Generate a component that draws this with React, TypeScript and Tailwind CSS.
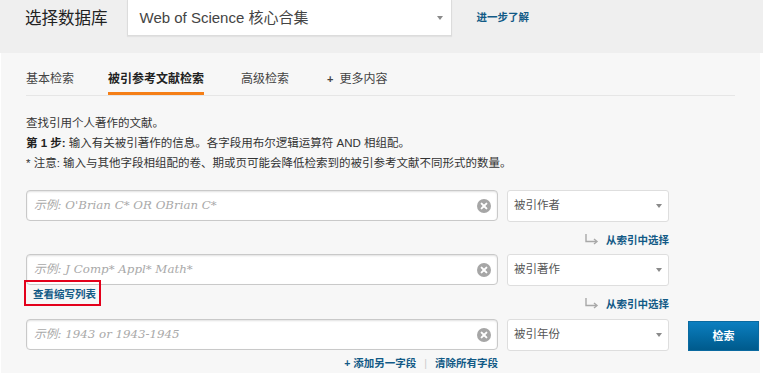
import React from "react";

const CJK = { fontFamily: '"Liberation Sans", "Noto Sans CJK SC", sans-serif' };
const PH = { fontFamily: '"DejaVu Serif", "Noto Sans CJK SC", serif' };

function ClearIcon() {
  return (
    <svg width="14" height="14" viewBox="0 0 14 14">
      <circle cx="7" cy="7" r="7" fill="#a6a6a6" />
      <path d="M4.6 4.6 L9.4 9.4 M9.4 4.6 L4.6 9.4" stroke="#fff" strokeWidth="2" strokeLinecap="round" />
    </svg>
  );
}

function Caret() {
  return (
    <svg width="6" height="4" viewBox="0 0 6 4">
      <path d="M0 0 L6 0 L3 4 Z" fill="#8a8a8a" />
    </svg>
  );
}

function Input({ placeholder }: { placeholder: string }) {
  return (
    <div className="w-[472px] h-[31px] bg-white border border-[#c9c9c9] rounded-[4px] shadow-[inset_0_1px_2px_rgba(0,0,0,0.12)] flex items-center pl-[7px] pr-[6px]">
      <span className="flex-1 italic text-[11.8px] text-[#a9a9a9]" style={PH}>
        {placeholder}
      </span>
      <ClearIcon />
    </div>
  );
}

function Select({ label }: { label: string }) {
  return (
    <div className="ml-[9px] w-[162px] h-[32px] bg-white border border-[#dedede] rounded-[3px] flex items-center pl-[6px] pr-[6px]">
      <span className="flex-1 text-[11.5px] text-[#555]">{label}</span>
      <Caret />
    </div>
  );
}

function IndexLink() {
  return (
    <div className="flex items-center h-[18px]">
      <svg width="14" height="11" viewBox="0 0 14 11" className="mr-[7px] mt-[-2px]">
        <path d="M1 0 V7.5 H11" stroke="#a8a8a8" strokeWidth="1.4" fill="none" />
        <path d="M9 5 L12 7.5 L9 10" stroke="#a8a8a8" strokeWidth="1.4" fill="none" />
      </svg>
      <span className="text-[10.5px] font-bold text-[#125a86] leading-[14px]">从索引中选择</span>
    </div>
  );
}

export default function App() {
  return (
    <div className="w-[763px] h-[380px] bg-white overflow-hidden text-[#333]" style={CJK}>
      {/* header */}
      <div className="h-[53px] bg-[#efefef] flex items-start">
        <div className="ml-[25px] mt-[8px] text-[16.5px] leading-[20px] text-[#222]">选择数据库</div>
        <div className="ml-[19px] w-[325px] h-[36px] bg-white border-x border-b border-[#dcdcdc] shadow-[0_1px_1px_rgba(0,0,0,0.05)] flex items-center pl-[12px] pr-[8px]">
          <span className="flex-1 text-[15px] text-[#444] leading-[18px]">Web of Science 核心合集</span>
          <Caret />
        </div>
        <div className="ml-[25px] mt-[10px] text-[10.5px] font-bold text-[#125a86] leading-[14px]">进一步了解</div>
      </div>

      {/* body */}
      <div className="ml-[1px] w-[759px] bg-[#f7f7f7] pb-[3px]">
        <div className="mx-[25px] flex border-b border-[#e6e6e6] text-[12px]">
          <div className="pt-[18px] pb-[8px] leading-[16px] text-[#444]">基本检索</div>
          <div className="ml-[34px] pt-[18px] pb-[5px] leading-[16px] border-b-[3px] border-[#f57f17] font-bold text-[#222]">
            被引参考文献检索
          </div>
          <div className="ml-[37px] pt-[18px] pb-[8px] leading-[16px] text-[#444]">高级检索</div>
          <div className="ml-[38px] pt-[18px] pb-[8px] leading-[16px] text-[#444] flex items-center">
            <span className="text-[11px] font-bold mr-[6px]">+</span>更多内容
          </div>
        </div>

        <div className="ml-[25px] mt-[17px] text-[11.5px] leading-[20px] text-[#333]">
          <div>查找引用个人著作的文献。</div>
          <div>
            <span className="font-bold text-[#222]">第 1 步:</span> 输入有关被引著作的信息。各字段用布尔逻辑运算符 AND 相组配。
          </div>
          <div>* 注意: 输入与其他字段相组配的卷、期或页可能会降低检索到的被引参考文献不同形式的数量。</div>
        </div>

        <div className="ml-[25px] mt-[17px]">
          <div className="flex">
            <Input placeholder="示例: O'Brian C* OR OBrian C*" />
            <Select label="被引作者" />
          </div>
          <div className="w-[643px] h-[27px] flex justify-end items-end">
            <IndexLink />
          </div>

          <div className="flex mt-[5px]">
            <Input placeholder="示例: J Comp* Appl* Math*" />
            <Select label="被引著作" />
          </div>
          <div className="w-[643px] h-[27px] flex justify-between">
            <div className="ml-[7px] mt-[2px] relative self-start">
              <span className="text-[10.5px] font-bold text-[#125a86] leading-[12px] block">查看缩写列表</span>
              <span className="absolute left-[-9px] right-[-5px] top-[-8px] bottom-[-6px] border-2 border-[#e3001b]"></span>
            </div>
            <div className="self-end">
              <IndexLink />
            </div>
          </div>

          <div className="flex items-start mt-[6px]">
            <Input placeholder="示例: 1943 or 1943-1945" />
            <Select label="被引年份" />
            <div className="ml-[19px] mt-[2px] w-[71px] h-[30px] bg-gradient-to-b from-[#0c7fc0] to-[#005a8c] border border-[#0a6aa0] flex items-center justify-center text-white text-[11px] font-bold">
              检索
            </div>
          </div>
          <div className="w-[472px] mt-[5px] flex justify-end items-center text-[10.5px] font-bold text-[#125a86] leading-[14px]">
            <span>+ 添加另一字段</span>
            <span className="mx-[8px] text-[#ccc] font-normal">|</span>
            <span>清除所有字段</span>
          </div>
        </div>
      </div>
    </div>
  );
}
